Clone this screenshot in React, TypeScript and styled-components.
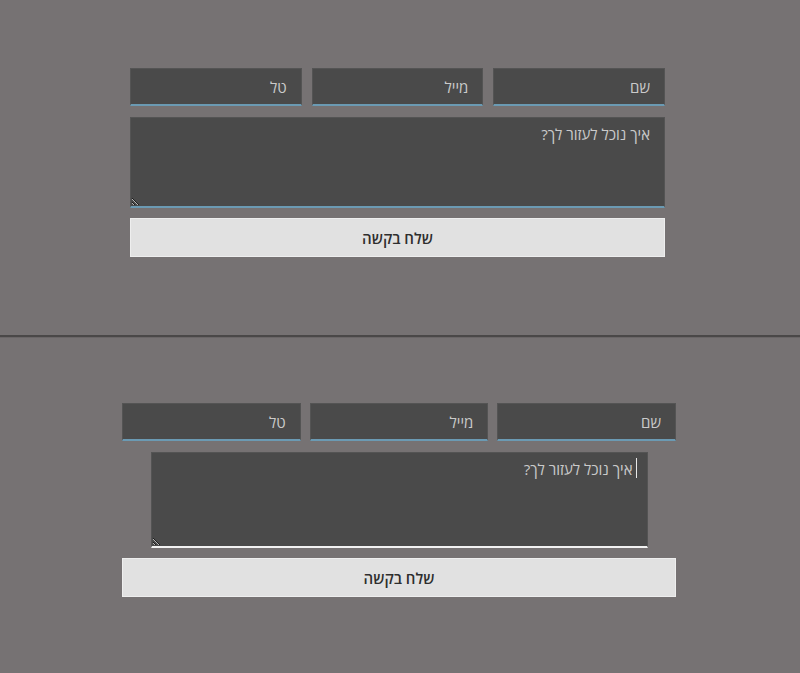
import React from "react";
import styled, { createGlobalStyle } from "styled-components";

const GlobalStyle = createGlobalStyle`
  html, body {
    margin: 0;
    padding: 0;
    background: #767273;
  }
  body {
    font-family: "Open Sans", "Liberation Sans", "DejaVu Sans", sans-serif;
  }
`;

const Page = styled.div`
  width: 800px;
  height: 673px;
  display: flex;
  flex-direction: column;
  background: #767273;
  overflow: hidden;
`;

const Section = styled.section<{ $top: number; $height: number; $shift: number }>`
  height: ${(p) => p.$height}px;
  box-sizing: border-box;
  padding-top: ${(p) => p.$top}px;
  padding-right: ${(p) => p.$shift}px;
  display: flex;
  justify-content: center;
`;

const Divider = styled.hr`
  margin: 0;
  border: 0;
  height: 2px;
  background: #4a4848;
  box-shadow: 0 1px 0 #6a6667;
`;

const Form = styled.form<{ $width: number }>`
  width: ${(p) => p.$width}px;
  display: flex;
  flex-direction: column;
  align-items: center;
  direction: rtl;
`;

const FieldRow = styled.div<{ $gap: number }>`
  width: 100%;
  display: grid;
  grid-template-columns: repeat(3, 1fr);
  column-gap: ${(p) => p.$gap}px;
`;

const Field = styled.input`
  box-sizing: border-box;
  height: 38px;
  width: 100%;
  margin: 0;
  padding: 0 14px 0 10px;
  background: #4a4a4a;
  border: 1px solid #545454;
  border-bottom: 2px solid #6b9ab3;
  border-radius: 0;
  color: #d0d0d0;
  font-family: inherit;
  font-size: 15px;
  outline: none;
  direction: rtl;
  &::placeholder {
    color: #cacaca;
    opacity: 1;
  }
`;

const MessageWrap = styled.div<{ $width: string }>`
  position: relative;
  width: ${(p) => p.$width};
  margin-top: 11px;
  display: flex;
`;

const Message = styled.textarea<{ $focused?: boolean; $height: number }>`
  box-sizing: border-box;
  width: 100%;
  height: ${(p) => p.$height}px;
  margin: 0;
  padding: 6px 14px 0 10px;
  background: #4a4a4a;
  border: 1px solid #545454;
  border-bottom: 2px solid ${(p) => (p.$focused ? "#f2f2f2" : "#6b9ab3")};
  border-radius: 0;
  color: #d0d0d0;
  font-family: inherit;
  font-size: 15px;
  line-height: 20px;
  outline: none;
  direction: rtl;
  resize: vertical;
  &::placeholder {
    color: #cacaca;
    opacity: 1;
  }
`;

/* text caret shown on the focused message box */
const Caret = styled.span`
  position: absolute;
  top: 6px;
  right: 11px;
  width: 1px;
  height: 20px;
  background: #e8e8e8;
`;

const Submit = styled.button`
  box-sizing: border-box;
  width: 100%;
  height: 39px;
  margin-top: 10px;
  background: #e1e1e1;
  border: 1px solid #eeeeee;
  border-radius: 0;
  color: #2e2e2e;
  font-family: inherit;
  font-size: 15px;
  font-weight: 600;
  cursor: pointer;
`;

type FormProps = {
  width: number;
  gap: number;
  messageWidth: string;
  messageHeight: number;
  focused?: boolean;
};

const ContactForm: React.FC<FormProps> = ({ width, gap, messageWidth, messageHeight, focused }) => (
  <Form $width={width} onSubmit={(e) => e.preventDefault()}>
    <FieldRow $gap={gap}>
      <Field type="text" placeholder="שם" />
      <Field type="email" placeholder="מייל" />
      <Field type="tel" placeholder="טל" />
    </FieldRow>
    <MessageWrap $width={messageWidth}>
      <Message
        dir="rtl"
        placeholder="איך נוכל לעזור לך?"
        $focused={focused}
        $height={messageHeight}
      />
      {focused && <Caret />}
    </MessageWrap>
    <Submit type="submit">שלח בקשה</Submit>
  </Form>
);

export default function App() {
  return (
    <>
      <GlobalStyle />
      <Page>
        <Section $top={68} $height={335} $shift={5}>
          <ContactForm width={535} gap={10} messageWidth="100%" messageHeight={91} />
        </Section>
        <Divider />
        <Section $top={66} $height={336} $shift={2}>
          <ContactForm
            width={554}
            gap={9}
            messageWidth="497px"
            messageHeight={96}
            focused
          />
        </Section>
      </Page>
    </>
  );
}
